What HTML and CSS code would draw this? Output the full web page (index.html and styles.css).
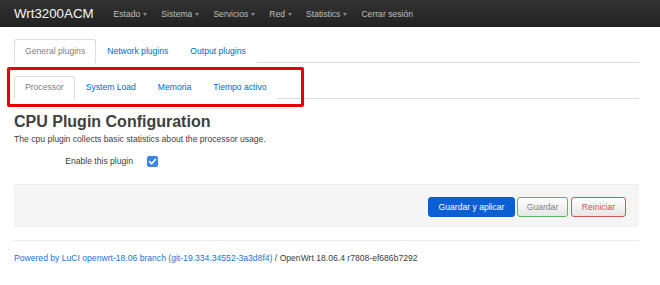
FILE: index.html
```html
<!DOCTYPE html>
<html>
<head>
<meta charset="utf-8">
<link rel="stylesheet" href="styles.css">
</head>
<body>
<header class="navbar">
  <a class="brand">Wrt3200ACM</a>
  <nav class="menu">
    <span class="item">Estado <i class="caret"></i></span>
    <span class="item">Sistema <i class="caret"></i></span>
    <span class="item">Servicios <i class="caret"></i></span>
    <span class="item">Red <i class="caret"></i></span>
    <span class="item">Statistics <i class="caret"></i></span>
    <span class="item">Cerrar sesión</span>
  </nav>
</header>
<main class="container">
  <ul class="tabs tabs-main">
    <li class="tab active">General plugins</li>
    <li class="tab">Network plugins</li>
    <li class="tab">Output plugins</li>
  </ul>
  <ul class="tabs tabs-sub">
    <li class="tab active">Processor</li>
    <li class="tab">System Load</li>
    <li class="tab">Memoria</li>
    <li class="tab">Tiempo activo</li>
  </ul>
  <h2 class="title">CPU Plugin Configuration</h2>
  <p class="desc">The cpu plugin collects basic statistics about the processor usage.</p>
  <div class="field">
    <label class="field-label">Enable this plugin</label>
    <span class="checkbox"><svg width="11" height="11" viewBox="0 0 11 11"><rect width="11" height="11" rx="2" fill="#3b86e0"/><path d="M2.5 5.6 L4.6 7.7 L8.6 3.3" fill="none" stroke="#fff" stroke-width="1.6" stroke-linecap="round" stroke-linejoin="round"/></svg></span>
  </div>
  <div class="actions">
    <button class="btn btn-apply">Guardar y aplicar</button>
    <button class="btn btn-save">Guardar</button>
    <button class="btn btn-reset">Reiniciar</button>
  </div>
  <footer class="footer">
    <a class="link">Powered by LuCI openwrt-18.06 branch (git-19.334.34552-3a3d8f4)</a> / OpenWrt 18.06.4 r7808-ef686b7292
  </footer>
</main>
<div class="highlight"></div>
</body>
</html>
```
FILE: styles.css
```css
* { box-sizing: border-box; }
body {
  margin: 0;
  font-family: "Liberation Sans", Arial, sans-serif;
  font-size: 8.6px;
  color: #404040;
  background: #fff;
}
.navbar {
  height: 27px;
  background: linear-gradient(#333, #222);
  display: flex;
  align-items: center;
  padding-left: 14px;
}
.brand {
  color: #f5f5f5;
  font-size: 13.3px;
  margin-right: 20px;
}
.menu {
  display: flex;
  gap: 14px;
}
.item {
  color: #bfbfbf;
  font-size: 8.6px;
  display: flex;
  align-items: center;
  gap: 3px;
}
.caret {
  display: inline-block;
  width: 0;
  height: 0;
  border-left: 2.5px solid transparent;
  border-right: 2.5px solid transparent;
  border-top: 3px solid #888;
  margin-top: 1px;
}
.container {
  width: 625px;
  margin-left: 14px;
}
.tabs {
  list-style: none;
  margin: 0;
  padding: 0;
  display: flex;
  border-bottom: 1px solid #ddd;
}
.tabs-main { margin-top: 12px; }
.tabs-sub { margin-top: 13px; }
.tab {
  color: #0069d6;
  padding: 0 10px;
  border: 1px solid transparent;
  border-bottom: 0;
  border-radius: 3px 3px 0 0;
  margin-bottom: -1px;
  background: #fff;
}
.tabs-main .tab { height: 24px; line-height: 22px; }
.tabs-sub .tab { height: 23px; line-height: 21px; }
.tab.active {
  color: #808080;
  border-color: #ddd;
}
.title {
  margin: 13px 0 0;
  font-size: 16px;
  line-height: 20px;
  font-weight: bold;
  color: #404040;
}
.desc {
  margin: 1px 0 0;
  line-height: 12px;
}
.field {
  display: flex;
  align-items: center;
  margin-top: 10px;
  height: 12px;
}
.field-label {
  width: 119px;
  text-align: right;
  color: #404040;
}
.checkbox {
  margin-left: 14px;
  display: flex;
}
.actions {
  margin-top: 17px;
  background: #f5f5f5;
  border-top: 1px solid #eee;
  height: 43px;
  display: flex;
  justify-content: flex-end;
  align-items: center;
  padding-right: 13px;
  gap: 2px;
}
.btn {
  font-family: inherit;
  font-size: 8.6px;
  height: 20px;
  padding: 0 8px;
  border-radius: 3px;
  margin-top: 1px;
}
.btn-apply {
  background: #0a5fd4;
  border: 1px solid #0a5acb;
  color: #fff;
  width: 87px;
}
.btn-save {
  background: linear-gradient(#fff, #e6e6e6);
  border: 1px solid #5cb85c;
  color: #808080;
  width: 51px;
}
.btn-reset {
  background: linear-gradient(#fff, #e6e6e6);
  border: 1px solid #d9534f;
  color: #d9534f;
  width: 55px;
  margin-left: 1px;
}
.footer {
  margin-top: 13px;
  border-top: 1px solid #eee;
  padding-top: 11px;
  line-height: 12px;
  color: #404040;
}
.link { color: #1a73d9; }
.highlight {
  position: absolute;
  left: 7px;
  top: 67px;
  width: 297px;
  height: 40px;
  border: 3px solid #e80000;
  border-radius: 2px;
}
```
